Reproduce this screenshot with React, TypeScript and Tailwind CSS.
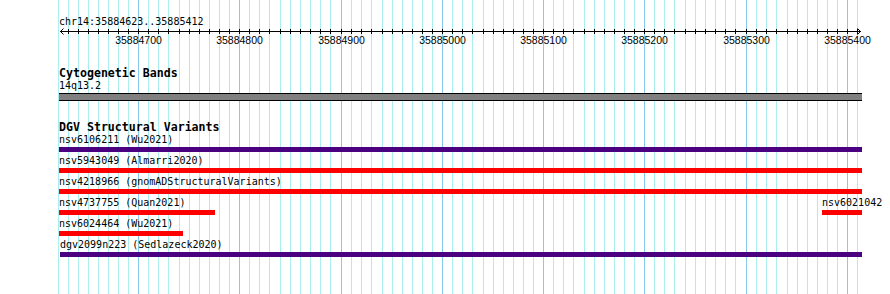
import React from "react";

const MAJORS = [138, 239, 341, 442, 543, 644, 746, 847];
const MAJOR_LABELS = [35884700, 35884800, 35884900, 35885000, 35885100, 35885200, 35885300, 35885400];

function minorXs(): number[] {
  const xs: number[] = [];
  for (let i = 8; i >= 1; i--) xs.push(138 - 10 * i);
  MAJORS.forEach((m) => {
    for (let i = 1; i <= 9; i++) {
      const x = m + Math.round(i * 10.13);
      if (x <= 859) xs.push(x);
    }
  });
  return xs;
}

const MINOR = minorXs();
const ALL_TICKS = [...MINOR, ...MAJORS].sort((a, b) => a - b);

const PURPLE = "#4b0082";
const RED = "#ff0000";

type Feature = { label: string; left: number; right: number; color: string };

const ROWS: Feature[][] = [
  [{ label: "nsv6106211 (Wu2021)", left: 59, right: 862, color: PURPLE }],
  [{ label: "nsv5943049 (Almarri2020)", left: 59, right: 862, color: RED }],
  [{ label: "nsv4218966 (gnomADStructuralVariants)", left: 59, right: 862, color: RED }],
  [
    { label: "nsv4737755 (Quan2021)", left: 59, right: 215, color: RED },
    { label: "nsv6021042 (Wu2021)", left: 822, right: 862, color: RED },
  ],
  [{ label: "nsv6024464 (Wu2021)", left: 59, right: 183, color: RED }],
  [{ label: "dgv2099n223 (Sedlazeck2020)", left: 60, right: 862, color: PURPLE }],
];

function GridLines() {
  return (
    <svg
      className="absolute left-0 top-0"
      width={890}
      height={294}
      shapeRendering="crispEdges"
    >
      {MINOR.map((x) => (
        <rect key={"m" + x} x={x} y={0} width={1} height={294} fill="#aaeef0" />
      ))}
      {MAJORS.map((x) => (
        <rect key={"M" + x} x={x} y={0} width={1} height={294} fill="#88c8ee" />
      ))}
    </svg>
  );
}

function Ruler() {
  return (
    <div className="relative h-[20px] w-full">
      <svg className="absolute left-0 top-0" width={890} height={20} shapeRendering="crispEdges">
        <rect x={60} y={3} width={801} height={1} fill="#000" />
        {ALL_TICKS.filter((x) => x > 61 && x < 859).map((x) => (
          <rect key={x} x={x} y={1} width={1} height={5} fill="#000" />
        ))}
        <polyline points="63.5,0.5 60.5,3.5 63.5,6.5" fill="none" stroke="#000" strokeWidth={1} shapeRendering="auto" />
        <polyline points="857.5,0.5 860.5,3.5 857.5,6.5" fill="none" stroke="#000" strokeWidth={1} shapeRendering="auto" />
      </svg>
      {MAJORS.map((x, i) => (
        <span
          key={x}
          className="absolute top-[6px] -translate-x-1/2 whitespace-nowrap font-['Liberation_Sans',sans-serif] text-[10.5px] leading-[12px] text-black"
          style={{ left: x + 0.5 }}
        >
          {MAJOR_LABELS[i]}
        </span>
      ))}
    </div>
  );
}

function FeatureRow({ features }: { features: Feature[] }) {
  return (
    <div className="relative h-[21px] w-full">
      {features.map((f) => (
        <div key={f.label} className="absolute top-0" style={{ left: f.left, width: f.right - f.left }}>
          <div className="h-[12px] whitespace-nowrap text-[10px] leading-[12px] text-black">{f.label}</div>
          <div className="mt-[1px] h-[5px] w-full" style={{ backgroundColor: f.color }} />
        </div>
      ))}
    </div>
  );
}

export default function App() {
  return (
    <div className="relative h-[294px] w-[890px] overflow-hidden bg-white font-['DejaVu_Sans_Mono',monospace] text-black">
      <GridLines />
      <div className="relative flex flex-col pt-[16px]">
        <div className="h-[12px] pl-[59px] text-[10px] leading-[12px]">chr14:35884623..35885412</div>
        <Ruler />
        <div className="mt-[18px] h-[14px] pl-[59px] text-[11.6px] font-bold leading-[14px]">Cytogenetic Bands</div>
        <div className="h-[12px] pl-[59px] text-[10px] leading-[12px]">14q13.2</div>
        <div className="ml-[59px] mt-[1px] h-[8px] w-[803px] border-y border-black bg-[#808080]" />
        <div className="mt-[20px] h-[13px] pl-[59px] text-[11.6px] font-bold leading-[13px]">DGV Structural Variants</div>
        {ROWS.map((r, i) => (
          <FeatureRow key={i} features={r} />
        ))}
      </div>
    </div>
  );
}
